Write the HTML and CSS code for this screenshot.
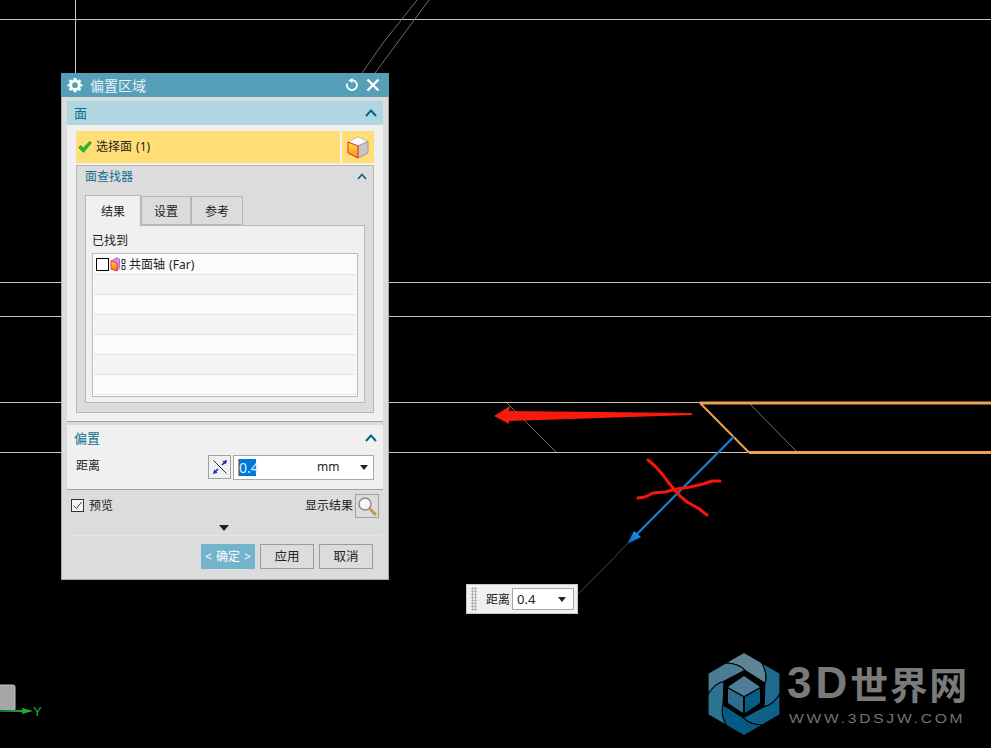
FILE: index.html
```html
<!DOCTYPE html>
<html lang="zh">
<head>
<meta charset="utf-8">
<title>偏置区域</title>
<link rel="stylesheet" href="styles.css">
</head>
<body>
<main class="scene">
  <svg class="drawing" width="991" height="748" viewBox="0 0 991 748">
    <defs>
      <linearGradient id="blueHead" x1="0" y1="1" x2="1" y2="0"><stop offset="0" stop-color="#0a62c0"/><stop offset="1" stop-color="#18a0f0"/></linearGradient>
      <linearGradient id="axisG" x1="0" y1="0" x2="1" y2="0"><stop offset="0" stop-color="#0e6e22"/><stop offset="1" stop-color="#22c040"/></linearGradient>
    </defs>
    <g class="ln-white">
      <path d="M0 19.500H991M0 282.500H991M0 316.500H991M0 402.500H700M0 452.500H748"/>
      <path d="M75.500 0V73"/>
    </g>
    <g class="ln-thin">
      <path d="M417 0L383 43L362 73M429 0L375 73"/>
      <path d="M507 403L556 452M749 403L797 452"/>
    </g>
    <path class="ln-orange" d="M991 403H700"/>
    <path class="ln-orange" d="M991 452.500H749"/>
    <path class="ln-orange-d" d="M700 403L749 452.500"/>
    <path class="ln-brown" d="M627 544L606 566L578 594"/>
    <path class="ln-blue" d="M734.500 436L632 539"/>
    <path fill="url(#blueHead)" d="M627 544L634 531L641 537Z"/>
    <path class="red-fill" d="M692 413L509 411L510 406L494 416L509 424L509 421L692 415Z"/>
    <path class="ln-red" d="M648 460L655 466L663 475L668 482L673 488L680 496L687 502L698 508L707 515"/>
    <path class="ln-red" d="M638 498L645 497L653 493L665 492L677 489L690 487L703 484L712 481L720 481"/>
    <rect class="axis-block" x="-4" y="685" width="19" height="26" rx="2"/>
    <path fill="url(#axisG)" d="M0 710H22V708L33 711L22 714V712H0Z"/>
    <text class="axis-y" x="33" y="716">Y</text>
  </svg>

  <section class="dialog">
    <header class="titlebar">
      <svg class="gear" width="16" height="16" viewBox="0 0 16 16"><path fill="#fff" fill-rule="evenodd" d="M6.700 1H9.300L9.700 2.900L10.900 3.400L12.500 2.300L14.300 4.200L13.200 5.800L13.700 7L15.500 7.400V9.100L13.700 9.500L13.200 10.700L14.300 12.300L12.500 14.100L10.900 13L9.700 13.500L9.300 15.300H6.700L6.300 13.500L5.100 13L3.500 14.100L1.700 12.300L2.800 10.700L2.300 9.500L.5 9.100V7.400L2.300 7L2.800 5.800L1.700 4.200L3.500 2.300L5.100 3.400L6.300 2.900ZM8 5.300A2.900 2.900 0 1 0 8 11.100A2.900 2.900 0 1 0 8 5.300Z"/></svg>
      <span class="title-text">偏置区域</span>
      <svg class="refresh" width="14" height="14" viewBox="0 0 14 14"><path class="w-stroke" d="M5.500 2.300A5 5 0 1 1 2.200 5.500"/><path fill="#fff" d="M7.500 0V5L3.500 2.400Z"/></svg>
      <svg class="close" width="14" height="14" viewBox="0 0 14 14"><path class="w-stroke-b" d="M1.500 1.500L12.500 12.500M12.500 1.500L1.500 12.500"/></svg>
    </header>
    <div class="dialog-body">
      <section class="panel panel-face">
        <div class="panel-head-blue">
          <span class="head-text">面</span>
          <svg class="chev" width="12" height="8" viewBox="0 0 12 8"><path d="M1 7L6 1.500L11 7"/></svg>
        </div>
        <div class="face-content">
          <div class="select-row">
            <div class="select-main">
              <svg class="check" width="14" height="12" viewBox="0 0 14 12"><path fill="#1cc02c" stroke="#0d8a1c" stroke-width=".6" d="M.5 6.500L3 4.500L5.200 7.200L11.500 .5L13.500 1.800L5.500 11.500Z"/></svg>
              <span>选择面 (1)</span>
            </div>
            <div class="select-icon">
              <svg width="22" height="23" viewBox="0 0 22 23">
                <defs><linearGradient id="faceOr" x1="0" y1="0" x2="0" y2="1"><stop offset="0" stop-color="#ffe04a"/><stop offset="1" stop-color="#f88a1a"/></linearGradient></defs>
                <path fill="#fafafc" stroke="#b0b0b0" stroke-width=".8" d="M1 6L11 .8L21 5.500L11 10Z"/>
                <path fill="#c6c6c6" stroke="#8a8a8a" stroke-width=".8" d="M11 10L21 5.500V17L11 22Z"/>
                <path fill="url(#faceOr)" stroke="#ee2a1a" stroke-width="1" d="M1 6L11 10V22L1 17Z"/>
              </svg>
            </div>
          </div>
          <div class="finder">
            <div class="finder-head">
              <span class="finder-title">面查找器</span>
              <svg class="chev chev-small" width="10" height="7" viewBox="0 0 10 7"><path d="M1 6L5 1.500L9 6"/></svg>
            </div>
            <div class="tabs">
              <span class="tab tab-active">结果</span>
              <span class="tab">设置</span>
              <span class="tab">参考</span>
            </div>
            <div class="tab-page">
              <div class="found">已找到</div>
              <div class="list">
                <div class="row row-first">
                  <span class="cb"></span>
                  <svg class="row-icon" width="16" height="15" viewBox="0 0 16 15">
                    <defs><linearGradient id="prism" x1="0" y1="0" x2="0" y2="1"><stop offset="0" stop-color="#ffd23c"/><stop offset="1" stop-color="#f8791c"/></linearGradient></defs>
                    <path fill="#e08ae8" stroke="#b050d0" stroke-width=".8" d="M1 4L6.500 .8L9.500 2V11L7 14V6Z"/>
                    <path fill="url(#prism)" stroke="#f03a2a" stroke-width="1" d="M1 4L7 6V14L1 12Z"/>
                    <path fill="#fff" stroke="#333" d="M12 2.500H15V6.500H12ZM12 8.500H15V12.500H12Z"/>
                  </svg>
                  <span class="row-text">共面轴 (Far)</span>
                </div>
                <div class="row row-alt"></div>
                <div class="row"></div>
                <div class="row row-alt"></div>
                <div class="row"></div>
                <div class="row row-alt"></div>
                <div class="row"></div>
              </div>
            </div>
          </div>
        </div>
      </section>

      <section class="panel panel-offset">
        <div class="panel-head">
          <span class="head-text">偏置</span>
          <svg class="chev" width="12" height="8" viewBox="0 0 12 8"><path d="M1 7L6 1.500L11 7"/></svg>
        </div>
        <div class="dist-row">
          <span class="dist-label">距离</span>
          <span class="flip-btn">
            <svg width="18" height="18" viewBox="0 0 18 18">
              <path stroke="#333" stroke-width="1" d="M2.500 2.500L15.500 15.500"/>
              <path stroke="#1a2fb0" stroke-width="1.600" d="M3.500 14.500L7 11M11 7L14.500 3.500"/>
              <path fill="#1a2fb0" d="M16 2L14.800 6.500L11.500 3.200ZM2 16L3.200 11.500L6.500 14.800Z"/>
            </svg>
          </span>
          <div class="dist-input">
            <span class="sel">0.4</span>
            <span class="unit">mm</span>
            <span class="tri"></span>
          </div>
        </div>
      </section>

      <div class="preview-row">
        <span class="cb-check">
          <svg width="11" height="11" viewBox="0 0 11 11"><path fill="none" stroke="#444" stroke-width="1" d="M1.500 5.500L4.500 8.500L9.500 2"/></svg>
        </span>
        <span class="preview-label">预览</span>
        <span class="result-label">显示结果</span>
        <span class="lens-btn">
          <svg width="20" height="20" viewBox="0 0 20 20">
            <circle cx="8" cy="8" r="6" fill="#f4f8fa" stroke="#8a8a8a" stroke-width="1.400"/>
            <path stroke="#c09a40" stroke-width="3" stroke-linecap="round" d="M13 13L18 18"/>
          </svg>
        </span>
      </div>
      <div class="more"><span class="more-tri"></span></div>
      <div class="actions">
        <span class="btn btn-primary">&lt; 确定 &gt;</span>
        <span class="btn">应用</span>
        <span class="btn">取消</span>
      </div>
    </div>
  </section>

  <aside class="float-box">
    <span class="grip"></span>
    <span class="float-label">距离</span>
    <div class="float-select"><span class="float-value">0.4</span><span class="tri"></span></div>
  </aside>

  <div class="logo">
    <svg class="logo-mark" width="74" height="84" viewBox="-37 -42 74 84">
      <defs>
        <path id="blade" d="M-18.200 -31L0 -41.500L17.700 -31.300Q24 -20 21 -11L1 -23.700Q-5.300 -30.800 -18.200 -31Z"/>
      </defs>
      <g class="blades">
        <use href="#blade" fill="#5f8496"/>
        <use href="#blade" fill="#1d6a8e" transform="rotate(60)"/>
        <use href="#blade" fill="#0d6088" transform="rotate(120)"/>
        <use href="#blade" fill="#045a85" transform="rotate(180)"/>
        <use href="#blade" fill="#2f7393" transform="rotate(240)"/>
        <use href="#blade" fill="#4a7c94" transform="rotate(300)"/>
      </g>
      <path fill="#4f7f98" d="M0 -18L16 -7L0 2L-16 -7Z"/>
      <path fill="#2d6c8c" d="M-16 -5.500L-1 3V19L-16 9Z"/>
      <path fill="#0a5a86" d="M16 -5.500L1 3V19L16 9Z"/>
    </svg>
    <div class="logo-text">
      <div class="logo-name"><span class="logo-3d">3D</span><span class="logo-cn">世界网</span></div>
      <div class="logo-url">WWW.3DSJW.COM</div>
    </div>
  </div>
</main>
</body>
</html>
```
FILE: styles.css
```css
* { box-sizing: border-box; }
html, body { margin: 0; padding: 0; background: #000; }
body { font: 12px/1.2 "Noto Sans", "Noto Sans CJK SC", sans-serif; color: #222; word-spacing: 1px; }

.scene { position: relative; width: 991px; height: 748px; overflow: hidden; background: #000; }
.drawing { position: absolute; left: 0; top: 0; }

.ln-white { fill: none; stroke: #c8c8be; stroke-width: 1; }
.ln-thin { fill: none; stroke: #6e6e68; stroke-width: 1; }
.ln-orange { fill: none; stroke: #f0a04c; stroke-width: 3; }
.ln-orange-d { fill: none; stroke: #f0a04c; stroke-width: 2; }
.ln-brown { fill: none; stroke: #4c4630; stroke-width: 1; }
.ln-blue { fill: none; stroke: #1a80cc; stroke-width: 2.200; }
.ln-red { fill: none; stroke: #f8140c; stroke-width: 3; stroke-linecap: round; stroke-linejoin: round; }
.red-fill { fill: #f8190f; }
.axis-block { fill: #a6a6a6; stroke: #c4c4c4; stroke-width: 1; }
.axis-y { fill: #1cb83c; font: 13px "Liberation Sans", sans-serif; }

/* dialog */
.dialog { position: absolute; left: 61px; top: 73px; width: 328px; height: 507px; background: #dcdcdc; border: 1px solid #a9a9a9; border-top: 0; }
.titlebar { display: flex; align-items: center; height: 24px; margin: 0 -1px; padding: 0 9px 0 6px; background: #559fb8; color: #e6f3f7; }
.title-text { margin-left: 7px; padding-top: 2px; font-size: 14px; flex: 1; }
.close { margin-left: 7px; }
.w-stroke { fill: none; stroke: #fff; stroke-width: 1.800; }
.w-stroke-b { fill: none; stroke: #fff; stroke-width: 2.400; }

.dialog-body { padding: 4px 5px 0; }
.panel { background: #f0f0f0; border-bottom: 1px solid #a0a0a0; }
.panel-face { height: 321px; }
.panel-head-blue { display: flex; align-items: center; justify-content: space-between; height: 24px; padding: 0 6px 0 7px; background: #afd6e1; }
.panel-head { display: flex; align-items: center; justify-content: space-between; height: 30px; padding: 0 6px 4px 7px; }
.head-text { padding-top: 2px; font-size: 13px; color: #0f6f8f; }
.chev path { fill: none; stroke: #0a6584; stroke-width: 2; }
.chev-small path { stroke-width: 1.600; }

.face-content { padding: 6px 9px 0; }
.select-row { display: flex; gap: 2px; height: 32px; }
.select-main { display: flex; align-items: center; gap: 4px; flex: 1; padding-left: 2px; background: #ffdf75; }
.select-icon { display: flex; align-items: center; justify-content: center; width: 32px; background: #ffdf75; }

.finder { height: 248px; margin-top: 2px; padding: 0 8px; background: #dcdcdc; border: 1px solid #b6b6b6; }
.finder-head { display: flex; align-items: center; justify-content: space-between; height: 21px; margin-right: -2px; padding-right: 0; }
.finder-title { padding-top: 2px; color: #0f6f8f; font-size: 12px; }
.tabs { display: flex; align-items: flex-end; height: 32px; margin-top: 7px; }
.tab { display: flex; align-items: center; justify-content: center; width: 52px; height: 29px; margin-bottom: 1px; padding-top: 3px; background: #dcdcdc; border: 1px solid #b8b8b8; }
.tab-active { position: relative; z-index: 1; width: 56px; height: 32px; margin-bottom: -1px; padding-top: 2px; background: #f0f0f0; border-bottom: 0; }
.tab:nth-child(2) { width: 50px; }
.tab-page { height: 178px; margin-top: -1px; padding: 8px 6px 0; background: #f0f0f0; border: 1px solid #b8b8b8; }
.found { height: 19px; padding-top: 0; }
.list { width: 266px; height: 144px; padding: 1px 1px 0; background: #fff; border: 1px solid #b8b8b8; }
.row { display: flex; align-items: center; height: 20px; padding-left: 2px; background: #fbfbfb; border-bottom: 1px solid #e4e4e4; }
.row-alt { background: #f4f4f4; }
.row-text { padding-top: 2px; }
.cb { width: 13px; height: 13px; background: #fff; border: 1px solid #000; }
.row-icon { margin: 0 3px 0 1px; }

.panel-offset { height: 65px; margin-top: 3px; }
.dist-row { display: flex; align-items: flex-start; padding: 0 9px; }
.dist-label { flex: 1; padding-top: 4px; }
.flip-btn { display: flex; align-items: center; justify-content: center; width: 23px; height: 24px; background: #f0f0f0; border: 1px solid #a0a0a0; }
.dist-input { display: flex; align-items: center; width: 141px; height: 25px; margin-left: 2px; padding: 0 5px 0 4px; background: #fff; border: 1px solid #a8a8a8; }
.sel { width: 18px; height: 17px; line-height: 17px; font-size: 14px; color: #dfefff; background: #0078d7; border-left: 1px solid #f08020; }
.unit { margin-left: 61px; font-size: 12px; flex: 1; }
.tri { width: 0; height: 0; border-left: 4px solid transparent; border-right: 4px solid transparent; border-top: 5px solid #222; }

.preview-row { display: flex; align-items: center; height: 24px; margin-top: 4px; padding: 0 4px; }
.cb-check { display: flex; align-items: center; justify-content: center; width: 13px; height: 13px; margin-top: -1px; background: #f4f4f4; border: 1px solid #333; }
.preview-label { margin-left: 5px; flex: 1; }
.result-label { margin-right: 2px; }
.lens-btn { display: flex; align-items: center; justify-content: center; width: 24px; height: 24px; border: 1px solid #a0a0a0; }
.more { display: flex; justify-content: center; align-items: center; height: 18px; padding: 3px 2px 0 0; border-bottom: 1px solid #e4e4e4; }
.more-tri { width: 0; height: 0; border-left: 5px solid transparent; border-right: 5px solid transparent; border-top: 6px solid #222; }
.actions { display: flex; justify-content: flex-end; gap: 5px; padding: 8px 10px 0 0; }
.btn { display: flex; align-items: center; justify-content: center; width: 54px; height: 25px; background: #dcdcdc; border: 1px solid #9c9c9c; font-size: 12.500px; }
.btn-primary { padding-top: 2px; background: #72b4cb; border-color: #72b4cb; color: #fff; font-size: 12px; white-space: pre; }

/* floating input */
.float-box { position: absolute; left: 466px; top: 584px; display: flex; align-items: center; width: 112px; height: 30px; padding-left: 4px; background: #f0f0f0; border: 1px solid #c8c8c8; }
.grip { width: 6px; height: 24px; background-image: radial-gradient(#b4b4b4 1.200px, transparent 1.300px); background-size: 3px 3px; }
.float-label { margin-left: 9px; padding-top: 3px; }
.float-select { display: flex; align-items: center; justify-content: space-between; width: 62px; height: 22px; margin-left: 2px; padding: 0 7px 0 4px; background: #fff; border: 1px solid #a8a8a8; font-size: 13px; }
.float-value { padding-top: 2px; }

/* watermark */
.logo { position: absolute; left: 707px; top: 652px; display: flex; gap: 6px; }
.blades { stroke: #000; stroke-width: 1; }
.logo-text { padding-top: 9px; color: #7a7a7a; }
.logo-name { display: flex; align-items: center; height: 44px; font-weight: 700; white-space: nowrap; }
.logo-3d { font: 700 44px/44px "Liberation Sans", sans-serif; letter-spacing: 4px; }
.logo-cn { margin-left: -1px; font: 700 38px/44px "Noto Sans CJK SC", sans-serif; letter-spacing: 1.500px; }
.logo-url { margin: 7px 0 0 2px; font: 400 12.500px/14px "Liberation Sans", sans-serif; letter-spacing: 2.200px; color: #747474; white-space: nowrap; transform: scaleX(1.25); transform-origin: left center; }
```
